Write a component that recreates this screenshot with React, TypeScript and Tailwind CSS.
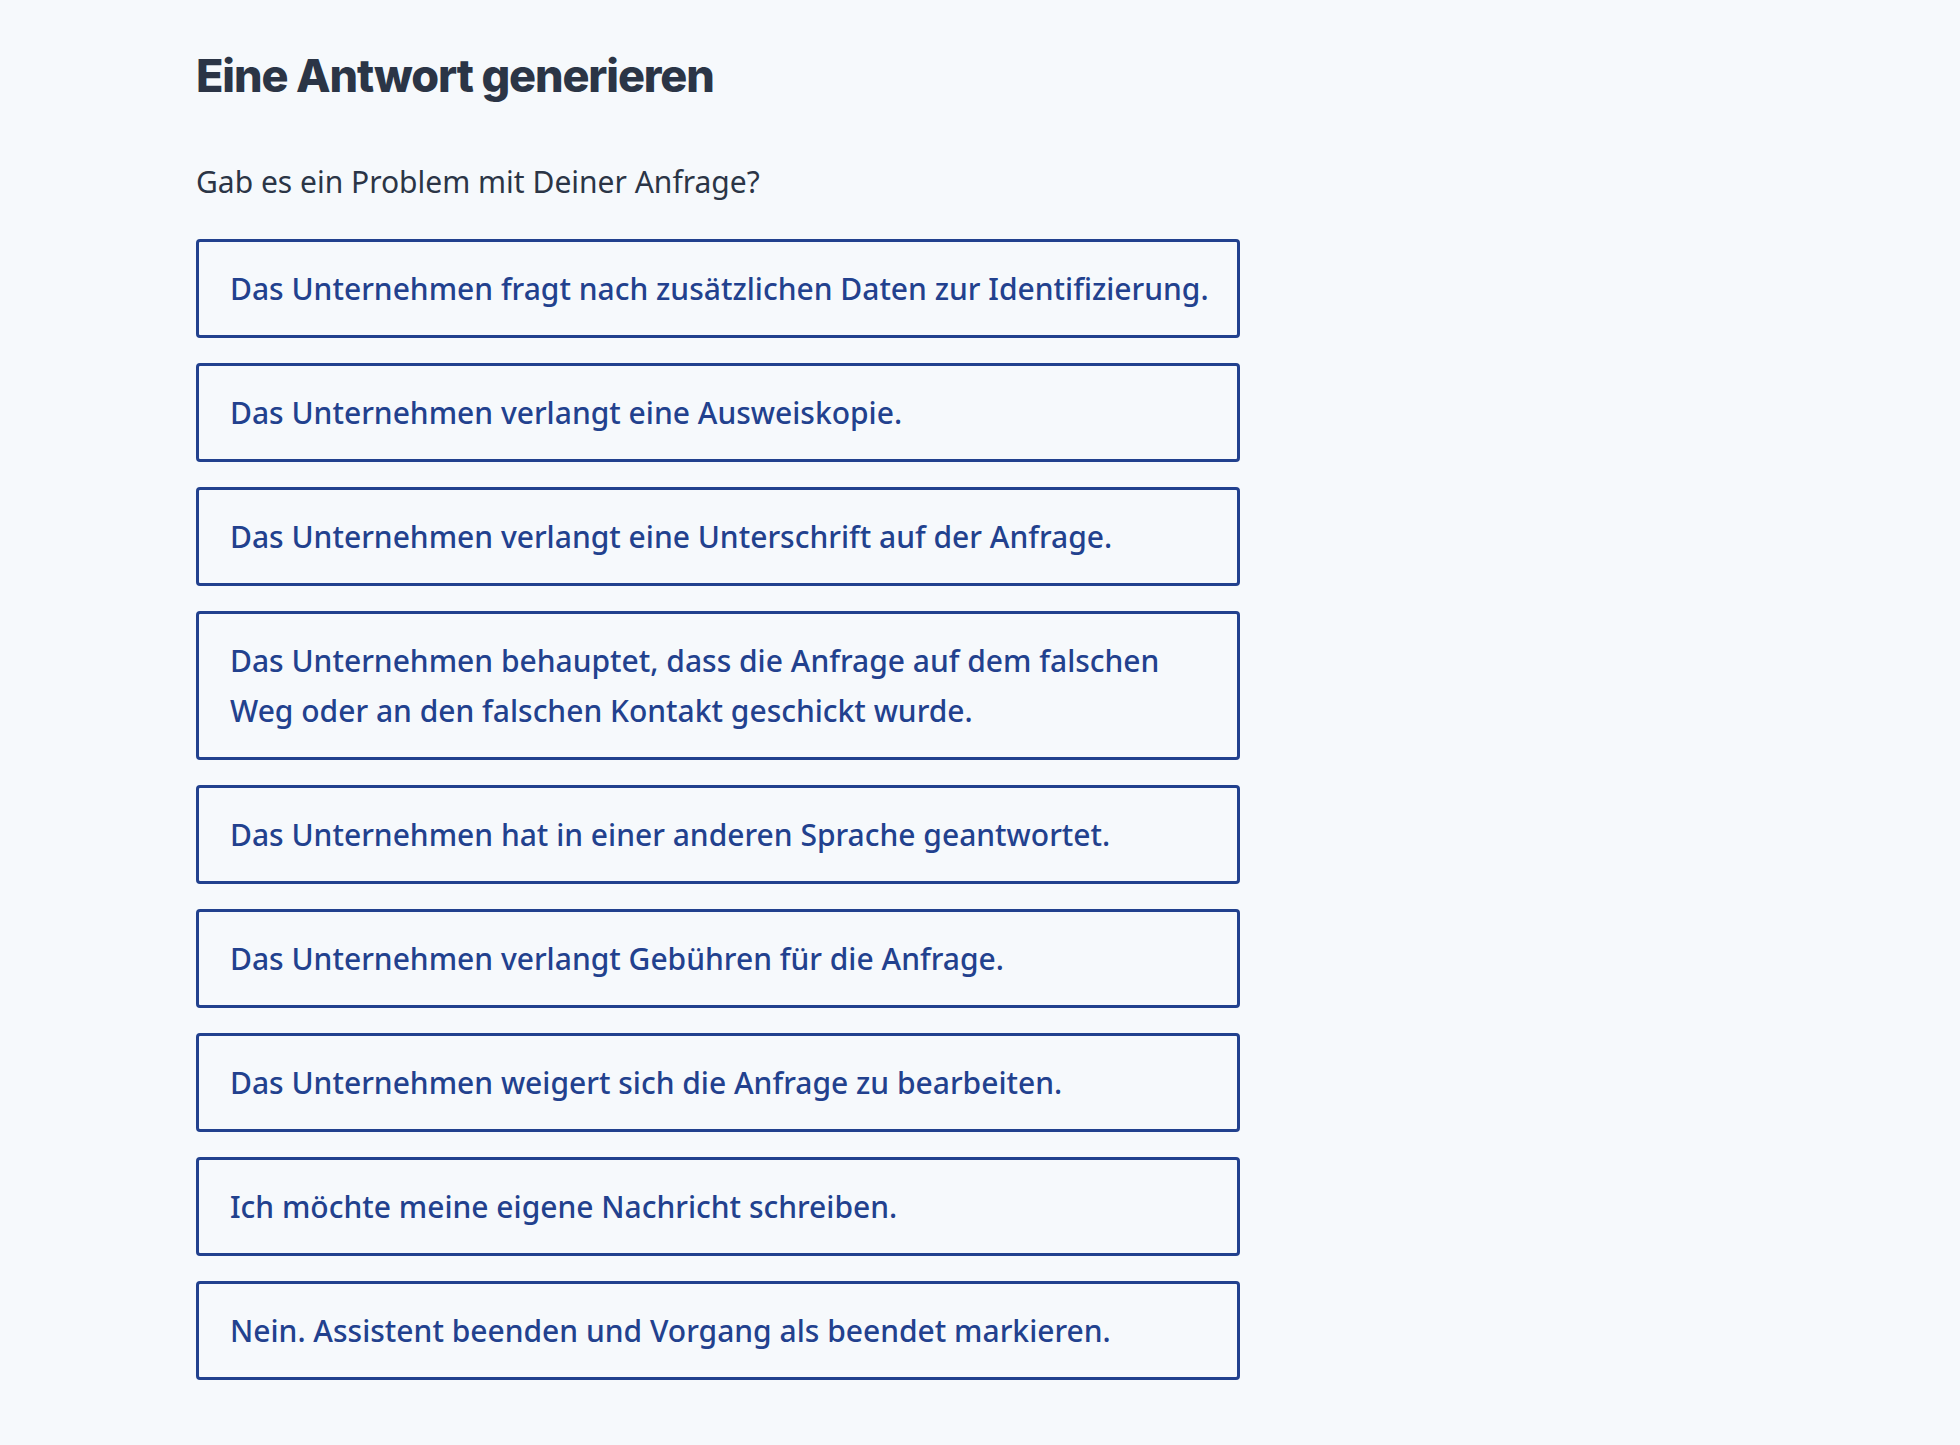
const OPTIONS = [
  'Das Unternehmen fragt nach zusätzlichen Daten zur Identifizierung.',
  'Das Unternehmen verlangt eine Ausweiskopie.',
  'Das Unternehmen verlangt eine Unterschrift auf der Anfrage.',
  'Das Unternehmen behauptet, dass die Anfrage auf dem falschen Weg oder an den falschen Kontakt geschickt wurde.',
  'Das Unternehmen hat in einer anderen Sprache geantwortet.',
  'Das Unternehmen verlangt Gebühren für die Anfrage.',
  'Das Unternehmen weigert sich die Anfrage zu bearbeiten.',
  'Ich möchte meine eigene Nachricht schreiben.',
  'Nein. Assistent beenden und Vorgang als beendet markieren.',
]

export default function App() {
  return (
    <div className="min-h-screen bg-[#f6f9fc] pl-[196px] pt-[48px] pb-10">
      <h1
        className="text-[45px] leading-[56px] font-extrabold tracking-[-0.025em] text-[#2b3546]"
        style={{ fontFamily: 'Inter, "Noto Sans", sans-serif' }}
      >
        Eine Antwort generieren
      </h1>
      <div style={{ fontFamily: '"Noto Sans", "Open Sans", sans-serif' }}>
        <p className="mt-[58px] text-[30px] leading-[40px] text-[#2b3546]">
          Gab es ein Problem mit Deiner Anfrage?
        </p>
        <div className="mt-[37px] flex w-[1044px] flex-col gap-[25px]">
          {OPTIONS.map(o => (
            <button
              key={o}
              className="rounded-[4px] border-[3px] border-[#22418e] pl-[31px] pr-[28px] py-[21.5px] text-left text-[30px] leading-[50px] font-medium text-[#22418e]"
            >
              {o}
            </button>
          ))}
        </div>
      </div>
    </div>
  )
}
